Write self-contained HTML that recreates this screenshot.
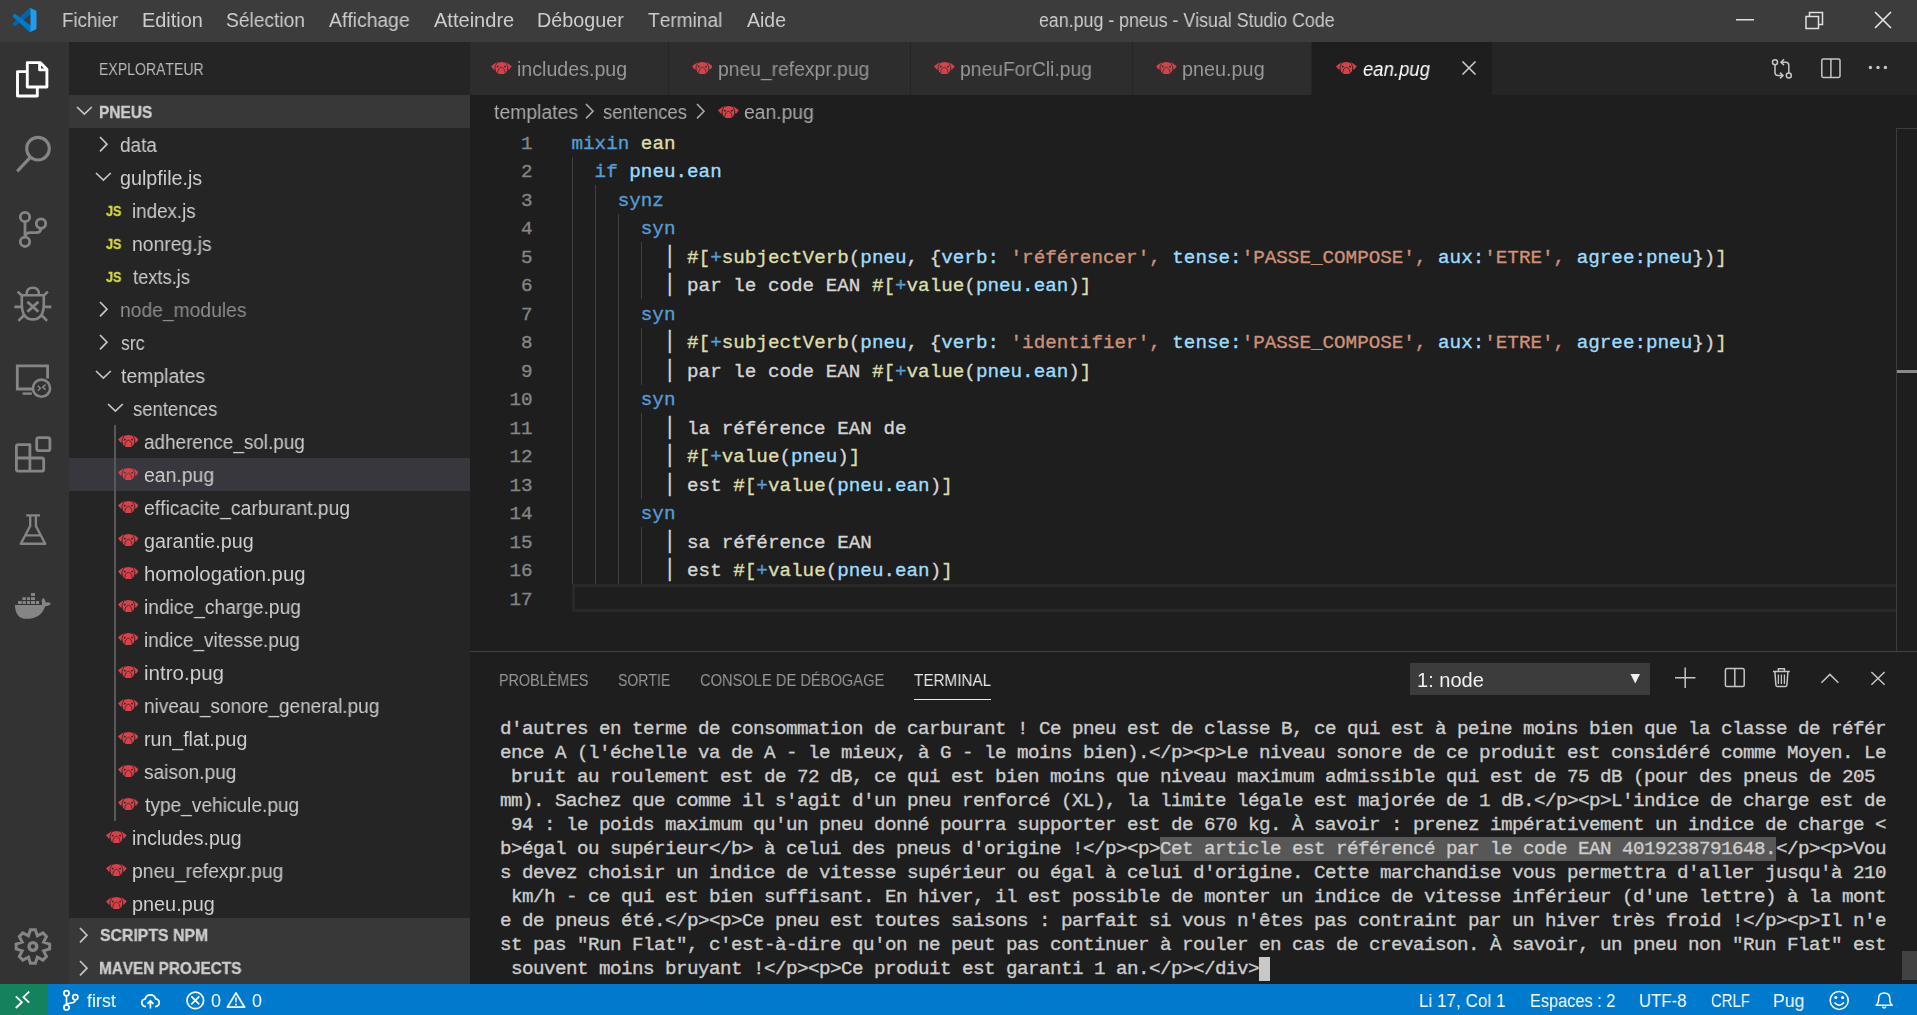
<!DOCTYPE html>
<html lang="fr"><head><meta charset="utf-8"><title>ean.pug - pneus - Visual Studio Code</title>
<style>
html,body{margin:0;padding:0;background:#1e1e1e}
body{width:1917px;height:1015px;position:relative;overflow:hidden;font-family:"Liberation Sans",sans-serif;font-kerning:none}
.b{position:absolute;display:block}
.t{position:absolute;white-space:pre;margin:0;transform-origin:0 0}
.g{will-change:transform}
.c{font-family:"Liberation Mono",monospace;font-size:19.25px;line-height:27px;-webkit-text-stroke:0.35px currentColor}
.p{display:inline-block;transform:scaleY(1.2);transform-origin:50% 69%}
.k{color:#569cd6}.f{color:#dcdcaa}.v{color:#9cdcfe}.s{color:#ce9178}
</style></head><body>

<div class="b" style="left:0px;top:0px;width:1917px;height:42px;background:#3c3c3c;"></div>
<div class="b" style="left:0px;top:42px;width:69px;height:942px;background:#333333;"></div>
<div class="b" style="left:69px;top:42px;width:401px;height:942px;background:#252526;"></div>
<div class="b" style="left:470px;top:42px;width:1447px;height:53px;background:#252526;"></div>
<div class="b" style="left:470px;top:95px;width:1447px;height:889px;background:#1e1e1e;"></div>
<div class="b" style="left:0px;top:984px;width:1917px;height:31px;background:#007acc;"></div>
<div class="b" style="left:0px;top:984px;width:48px;height:31px;background:#16825d;"></div>
<svg class="b" style="left:12px;top:8px;" width="25" height="24" viewBox="0 0 256 256"><path d="M246.94 27.638L194.193 2.241a15.947 15.947 0 0 0-18.194 3.092L3.324 162.773c-4.645 4.235-4.64 11.547.011 15.775L17.44 191.37a10.667 10.667 0 0 0 13.622.606L239.003 34.226c6.976-5.292 16.996-.317 16.996 8.44v-.612a16 16 0 0 0-9.059-14.416z" fill="#0065A9"/><path d="M246.94 228.362l-52.747 25.397a15.95 15.95 0 0 1-18.194-3.092L3.324 93.227c-4.645-4.234-4.64-11.547.011-15.775L17.44 64.63a10.667 10.667 0 0 1 13.622-.605l207.941 157.748c6.976 5.292 16.996.317 16.996-8.44v.613a16.001 16.001 0 0 1-9.059 14.416z" fill="#007ACC"/><path d="M194.196 253.763A15.955 15.955 0 0 1 176 250.667c5.904 5.904 16 1.722 16-6.628V11.961c0-8.35-10.096-12.532-16-6.628a15.955 15.955 0 0 1 18.196-3.097L246.934 27.6A16 16 0 0 1 256 42.017v171.965a16 16 0 0 1-9.066 14.419l-52.738 25.362z" fill="#1F9CF0"/></svg>
<div class="t g" style="left:61.67px;top:7.00px;line-height:27px;font-size:19.5px;color:#cccccc;transform:scaleX(0.9596);">Fichier</div>
<div class="t g" style="left:141.67px;top:7.00px;line-height:27px;font-size:19.5px;color:#cccccc;transform:scaleX(1.0219);">Edition</div>
<div class="t g" style="left:226.03px;top:7.00px;line-height:27px;font-size:19.5px;color:#cccccc;transform:scaleX(0.9851);">Sélection</div>
<div class="t g" style="left:329.06px;top:7.00px;line-height:27px;font-size:19.5px;color:#cccccc;transform:scaleX(0.9925);">Affichage</div>
<div class="t g" style="left:434.06px;top:7.00px;line-height:27px;font-size:19.5px;color:#cccccc;transform:scaleX(1.0280);">Atteindre</div>
<div class="t g" style="left:537.18px;top:7.00px;line-height:27px;font-size:19.5px;color:#cccccc;transform:scaleX(1.0129);">Déboguer</div>
<div class="t g" style="left:648.47px;top:7.00px;line-height:27px;font-size:19.5px;color:#cccccc;transform:scaleX(0.9797);">Terminal</div>
<div class="t g" style="left:747.06px;top:7.00px;line-height:27px;font-size:19.5px;color:#cccccc;transform:scaleX(0.9967);">Aide</div>
<div class="t g" style="left:1038.84px;top:7.00px;line-height:27px;font-size:19.5px;color:#cccccc;transform:scaleX(0.9121);">ean.pug - pneus - Visual Studio Code</div>
<svg class="b" style="left:1736px;top:19px;" width="18" height="2" viewBox="0 0 18 2"><rect width="18" height="1.5" fill="#e0e0e0"/></svg>
<svg class="b" style="left:1805px;top:11px;" width="19" height="19" viewBox="0 0 19 19"><path d="M1 5.5 H13.5 V17.5 H1Z M4.5 5.5 V1.5 H17.5 V13.5 H13.5" fill="none" stroke="#e0e0e0" stroke-width="1.5"/></svg>
<svg class="b" style="left:1874px;top:11px;" width="18" height="18" viewBox="0 0 18 18"><path d="M1 1 L17 17 M17 1 L1 17" fill="none" stroke="#e8e8e8" stroke-width="1.6"/></svg>
<svg class="b" style="left:0px;top:0px;" width="69" height="984" viewBox="0 0 69 984">
<g fill="none" stroke="#ffffff" stroke-width="2.9" stroke-linejoin="round">
<path d="M27.3 62.6 H40.2 L46.9 69.3 V87 H27.3Z M39.6 62.8 V69.9 H46.7" />
<path d="M27.2 71.6 H17.5 V96 H37.3 V87.4"/>
</g>
<g fill="none" stroke="#858585" stroke-width="3.1">
<circle cx="38" cy="148.7" r="11.3"/><path d="M30 157.6 L17.2 171.4"/>
</g>
<g fill="none" stroke="#858585" stroke-width="2.8">
<circle cx="25" cy="217" r="4.7"/><circle cx="25" cy="241.8" r="4.7"/><circle cx="41" cy="223.6" r="4.7"/>
<path d="M25 221.7 V237.1 M41 228.3 Q40.6 232.6 36.5 232.6 H30 Q26 232.6 25 236.6"/>
</g>
<g fill="none" stroke="#858585" stroke-width="2.6">
<path d="M21.8 295.2 H43.8 V304 Q43.8 319.4 32.8 319.4 Q21.8 319.4 21.8 304Z"/>
<path d="M26.7 295.2 V294 Q26.7 287.7 32.8 287.7 Q38.9 287.7 38.9 294 V295.2"/>
<path d="M14.4 306.9 H21 M44.6 306.9 H51.3 M17.6 291.6 L22.4 296 M47.9 291.6 L43.2 296 M18.4 320.8 L24.2 315 M47.1 320.8 L41.4 315"/>
<path d="M27.4 301.8 L38.4 311.8 M38.4 301.8 L27.4 311.8" stroke-width="2.9"/>
</g>
<g fill="none" stroke="#858585" stroke-width="2.8">
<path d="M32 389 H17.3 V365.9 H47.6 V378.4"/><path d="M22.6 393.6 H31.8" stroke-width="2.4"/>
<circle cx="41.5" cy="388.2" r="8.6" stroke-width="2.6"/>
<path d="M37.8 385.8 L40.4 388.2 L37.8 390.8 M45.6 384.6 L42.6 387.2 L45.6 389.6" stroke-width="1.5"/>
</g>
<g fill="none" stroke="#858585" stroke-width="2.8" stroke-linejoin="round">
<path d="M18.4 444.7 H29.9 V458 H41.7 Q43.7 458 43.7 460 V469.2 Q43.7 471.2 41.7 471.2 H18.4 Q16.4 471.2 16.4 469.2 V446.7 Q16.4 444.7 18.4 444.7Z M29.9 458 V471.2 M16.4 458 H29.9"/>
<rect x="36.7" y="437.7" width="13.2" height="13" rx="2"/>
</g>
<g fill="none" stroke="#858585" stroke-width="2.4" stroke-linejoin="round">
<path d="M26.2 515.4 H40 M30.2 515.4 V526 L20.8 543.8 H45.2 L35.9 526 V515.4 M25.3 535.4 H40.6"/>
</g>
<g fill="#858585">
<path d="M14.9 604.9 H41.8 Q42.6 603.6 41.7 602 Q41.2 599.6 43.2 597.8 Q45.4 599.6 45.6 602.4 Q48.5 601.6 50.9 603.4 Q49.5 606 45.2 606.2 Q41 618.8 26.5 618.8 Q15.4 618.8 14.9 604.9Z"/>
<path d="M18 601h3.8v3.1h-3.8z M22.6 601h3.3v3.1h-3.3z M27 601h3.1v3.1h-3.1z M31 601h4v3.1h-4z M35.9 601h3.2v3.1h-3.2z M22.4 597.2h3.5v2.9h-3.5z M27 597.2h3.1v2.9h-3.1z M31 597.2h4v2.9h-4z M31 593h4v3h-4z"/>
</g>
<g fill="none" stroke="#858585" stroke-width="3">
<path d="M30.43 929.78 L35.37 929.78 L37.34 935.78 L42.97 932.93 L46.47 936.43 L43.62 942.06 L49.62 944.03 L49.62 948.97 L43.62 950.94 L46.47 956.57 L42.97 960.07 L37.34 957.22 L35.37 963.22 L30.43 963.22 L28.46 957.22 L22.83 960.07 L19.33 956.57 L22.18 950.94 L16.18 948.97 L16.18 944.03 L22.18 942.06 L19.33 936.43 L22.83 932.93 L28.46 935.78Z"/><circle cx="32.9" cy="946.5" r="3.85" stroke-width="3.4"/>
</g>
</svg>
<div class="t g" style="left:99.05px;top:58.00px;line-height:24px;font-size:17px;color:#bbbbbb;transform:scaleX(0.8271);">EXPLORATEUR</div>
<div class="b" style="left:69px;top:95px;width:401px;height:33px;background:#383838;"></div>
<svg class="b" style="left:74.89999999999999px;top:104.7px;" width="18.8" height="11.0" viewBox="74.89999999999999 104.7 18.8 11.0"><path d="M76.89999999999999 106.7 L84.3 113.7 L91.7 106.7" fill="none" stroke="#c5c5c5" stroke-width="1.7"/></svg>
<div class="t g" style="left:99.17px;top:101.00px;line-height:24px;font-size:17px;color:#cccccc;transform:scaleX(0.9089);font-weight:bold;-webkit-text-stroke:0.35px currentColor;">PNEUS</div>
<div class="b" style="left:69px;top:458px;width:401px;height:33px;background:#37373d;"></div>
<div class="b" style="left:113.9px;top:425px;width:1.7px;height:396px;background:#585858;"></div>
<div class="t g" style="left:119.80px;top:132.00px;line-height:27px;font-size:19.5px;color:#cccccc;transform:scaleX(0.9749);">data</div>
<svg class="b" style="left:97.9px;top:134.5px;" width="11.0" height="18.4" viewBox="97.9 134.5 11.0 18.4"><path d="M99.9 136.5 L106.9 143.7 L99.9 150.89999999999998" fill="none" stroke="#c5c5c5" stroke-width="1.7"/></svg>
<div class="t g" style="left:119.77px;top:165.00px;line-height:27px;font-size:19.5px;color:#cccccc;transform:scaleX(1.0116);">gulpfile.js</div>
<svg class="b" style="left:94.0px;top:171.2px;" width="18.8" height="11.0" viewBox="94.0 171.2 18.8 11.0"><path d="M96.0 173.2 L103.4 180.2 L110.80000000000001 173.2" fill="none" stroke="#c5c5c5" stroke-width="1.7"/></svg>
<div class="t g" style="left:131.94px;top:198.00px;line-height:27px;font-size:19.5px;color:#cccccc;transform:scaleX(0.9640);">index.js</div>
<div class="t g" style="left:105.81px;top:200.00px;line-height:21px;font-size:15px;color:#d5d544;transform:scaleX(0.8441);font-weight:bold;-webkit-text-stroke:0.35px currentColor;">JS</div>
<div class="t g" style="left:131.92px;top:231.00px;line-height:27px;font-size:19.5px;color:#cccccc;transform:scaleX(0.9921);">nonreg.js</div>
<div class="t g" style="left:105.81px;top:233.00px;line-height:21px;font-size:15px;color:#d5d544;transform:scaleX(0.8441);font-weight:bold;-webkit-text-stroke:0.35px currentColor;">JS</div>
<div class="t g" style="left:132.92px;top:264.00px;line-height:27px;font-size:19.5px;color:#cccccc;transform:scaleX(0.9383);">texts.js</div>
<div class="t g" style="left:105.81px;top:266.00px;line-height:21px;font-size:15px;color:#d5d544;transform:scaleX(0.8441);font-weight:bold;-webkit-text-stroke:0.35px currentColor;">JS</div>
<div class="t g" style="left:119.82px;top:297.00px;line-height:27px;font-size:19.5px;color:#8c8c8c;transform:scaleX(0.9886);">node_modules</div>
<svg class="b" style="left:97.9px;top:299.5px;" width="11.0" height="18.4" viewBox="97.9 299.5 11.0 18.4"><path d="M99.9 301.5 L106.9 308.7 L99.9 315.9" fill="none" stroke="#c5c5c5" stroke-width="1.7"/></svg>
<div class="t g" style="left:120.61px;top:330.00px;line-height:27px;font-size:19.5px;color:#cccccc;transform:scaleX(0.9063);">src</div>
<svg class="b" style="left:97.9px;top:332.5px;" width="11.0" height="18.4" viewBox="97.9 332.5 11.0 18.4"><path d="M99.9 334.5 L106.9 341.7 L99.9 348.9" fill="none" stroke="#c5c5c5" stroke-width="1.7"/></svg>
<div class="t g" style="left:120.91px;top:363.00px;line-height:27px;font-size:19.5px;color:#cccccc;transform:scaleX(0.9947);">templates</div>
<svg class="b" style="left:94.0px;top:369.2px;" width="18.8" height="11.0" viewBox="94.0 369.2 18.8 11.0"><path d="M96.0 371.2 L103.4 378.2 L110.80000000000001 371.2" fill="none" stroke="#c5c5c5" stroke-width="1.7"/></svg>
<div class="t g" style="left:132.69px;top:396.00px;line-height:27px;font-size:19.5px;color:#cccccc;transform:scaleX(0.9481);">sentences</div>
<svg class="b" style="left:106.0px;top:402.2px;" width="18.8" height="11.0" viewBox="106.0 402.2 18.8 11.0"><path d="M108.0 404.2 L115.4 411.2 L122.80000000000001 404.2" fill="none" stroke="#c5c5c5" stroke-width="1.7"/></svg>
<div class="t g" style="left:144.20px;top:429.00px;line-height:27px;font-size:19.5px;color:#cccccc;transform:scaleX(0.9695);">adherence_sol.pug</div>
<svg class="b" style="left:117.7px;top:435.3px;" width="20.8" height="12" viewBox="0 0 20.8 12"><g fill="#d8404a"><path d="M0 4.2 L5.2 .5 L5.9 1 L4.1 4.8 L3.9 7.7 L2.6 7.6 L1.2 5.8Z"/><path d="M20.8 4.2 L15.6 .5 L14.9 1 L16.7 4.8 L16.9 7.7 L18.2 7.6 L19.6 5.8Z"/><path d="M6.5 .75 L10.4 .1 L14.3 .75 L15.4 1.2 L16.7 4.8 L16.6 6.8 L15.5 10.3 L13.6 11.2 L13.4 12 H7.4 L7.2 11.2 L5.3 10.3 L4.2 6.8 L4.1 4.8 L5.4 1.2Z"/></g><g fill="none" stroke="#252526" stroke-width=".75"><path d="M5.8 .9 L4.1 4.7 L3.9 7.8 M15 .9 L16.7 4.7 L16.9 7.8"/><path d="M6.8 10.8 Q6.9 7.6 8.3 6.4 Q9.6 5.3 10.4 5.2 Q11.2 5.3 12.5 6.4 Q13.9 7.6 14 10.8"/></g><circle cx="6.75" cy="4.6" r=".95" fill="#252526"/><circle cx="14.05" cy="4.6" r=".95" fill="#252526"/></svg>
<div class="t g" style="left:144.18px;top:462.00px;line-height:27px;font-size:19.5px;color:#cccccc;transform:scaleX(0.9941);">ean.pug</div>
<svg class="b" style="left:117.7px;top:468.3px;" width="20.8" height="12" viewBox="0 0 20.8 12"><g fill="#d8404a"><path d="M0 4.2 L5.2 .5 L5.9 1 L4.1 4.8 L3.9 7.7 L2.6 7.6 L1.2 5.8Z"/><path d="M20.8 4.2 L15.6 .5 L14.9 1 L16.7 4.8 L16.9 7.7 L18.2 7.6 L19.6 5.8Z"/><path d="M6.5 .75 L10.4 .1 L14.3 .75 L15.4 1.2 L16.7 4.8 L16.6 6.8 L15.5 10.3 L13.6 11.2 L13.4 12 H7.4 L7.2 11.2 L5.3 10.3 L4.2 6.8 L4.1 4.8 L5.4 1.2Z"/></g><g fill="none" stroke="#37373d" stroke-width=".75"><path d="M5.8 .9 L4.1 4.7 L3.9 7.8 M15 .9 L16.7 4.7 L16.9 7.8"/><path d="M6.8 10.8 Q6.9 7.6 8.3 6.4 Q9.6 5.3 10.4 5.2 Q11.2 5.3 12.5 6.4 Q13.9 7.6 14 10.8"/></g><circle cx="6.75" cy="4.6" r=".95" fill="#37373d"/><circle cx="14.05" cy="4.6" r=".95" fill="#37373d"/></svg>
<div class="t g" style="left:144.18px;top:495.00px;line-height:27px;font-size:19.5px;color:#cccccc;transform:scaleX(0.9901);">efficacite_carburant.pug</div>
<svg class="b" style="left:117.7px;top:501.3px;" width="20.8" height="12" viewBox="0 0 20.8 12"><g fill="#d8404a"><path d="M0 4.2 L5.2 .5 L5.9 1 L4.1 4.8 L3.9 7.7 L2.6 7.6 L1.2 5.8Z"/><path d="M20.8 4.2 L15.6 .5 L14.9 1 L16.7 4.8 L16.9 7.7 L18.2 7.6 L19.6 5.8Z"/><path d="M6.5 .75 L10.4 .1 L14.3 .75 L15.4 1.2 L16.7 4.8 L16.6 6.8 L15.5 10.3 L13.6 11.2 L13.4 12 H7.4 L7.2 11.2 L5.3 10.3 L4.2 6.8 L4.1 4.8 L5.4 1.2Z"/></g><g fill="none" stroke="#252526" stroke-width=".75"><path d="M5.8 .9 L4.1 4.7 L3.9 7.8 M15 .9 L16.7 4.7 L16.9 7.8"/><path d="M6.8 10.8 Q6.9 7.6 8.3 6.4 Q9.6 5.3 10.4 5.2 Q11.2 5.3 12.5 6.4 Q13.9 7.6 14 10.8"/></g><circle cx="6.75" cy="4.6" r=".95" fill="#252526"/><circle cx="14.05" cy="4.6" r=".95" fill="#252526"/></svg>
<div class="t g" style="left:144.17px;top:528.00px;line-height:27px;font-size:19.5px;color:#cccccc;transform:scaleX(1.0118);">garantie.pug</div>
<svg class="b" style="left:117.7px;top:534.3px;" width="20.8" height="12" viewBox="0 0 20.8 12"><g fill="#d8404a"><path d="M0 4.2 L5.2 .5 L5.9 1 L4.1 4.8 L3.9 7.7 L2.6 7.6 L1.2 5.8Z"/><path d="M20.8 4.2 L15.6 .5 L14.9 1 L16.7 4.8 L16.9 7.7 L18.2 7.6 L19.6 5.8Z"/><path d="M6.5 .75 L10.4 .1 L14.3 .75 L15.4 1.2 L16.7 4.8 L16.6 6.8 L15.5 10.3 L13.6 11.2 L13.4 12 H7.4 L7.2 11.2 L5.3 10.3 L4.2 6.8 L4.1 4.8 L5.4 1.2Z"/></g><g fill="none" stroke="#252526" stroke-width=".75"><path d="M5.8 .9 L4.1 4.7 L3.9 7.8 M15 .9 L16.7 4.7 L16.9 7.8"/><path d="M6.8 10.8 Q6.9 7.6 8.3 6.4 Q9.6 5.3 10.4 5.2 Q11.2 5.3 12.5 6.4 Q13.9 7.6 14 10.8"/></g><circle cx="6.75" cy="4.6" r=".95" fill="#252526"/><circle cx="14.05" cy="4.6" r=".95" fill="#252526"/></svg>
<div class="t g" style="left:143.59px;top:561.00px;line-height:27px;font-size:19.5px;color:#cccccc;transform:scaleX(1.0418);">homologation.pug</div>
<svg class="b" style="left:117.7px;top:567.3px;" width="20.8" height="12" viewBox="0 0 20.8 12"><g fill="#d8404a"><path d="M0 4.2 L5.2 .5 L5.9 1 L4.1 4.8 L3.9 7.7 L2.6 7.6 L1.2 5.8Z"/><path d="M20.8 4.2 L15.6 .5 L14.9 1 L16.7 4.8 L16.9 7.7 L18.2 7.6 L19.6 5.8Z"/><path d="M6.5 .75 L10.4 .1 L14.3 .75 L15.4 1.2 L16.7 4.8 L16.6 6.8 L15.5 10.3 L13.6 11.2 L13.4 12 H7.4 L7.2 11.2 L5.3 10.3 L4.2 6.8 L4.1 4.8 L5.4 1.2Z"/></g><g fill="none" stroke="#252526" stroke-width=".75"><path d="M5.8 .9 L4.1 4.7 L3.9 7.8 M15 .9 L16.7 4.7 L16.9 7.8"/><path d="M6.8 10.8 Q6.9 7.6 8.3 6.4 Q9.6 5.3 10.4 5.2 Q11.2 5.3 12.5 6.4 Q13.9 7.6 14 10.8"/></g><circle cx="6.75" cy="4.6" r=".95" fill="#252526"/><circle cx="14.05" cy="4.6" r=".95" fill="#252526"/></svg>
<div class="t g" style="left:143.72px;top:594.00px;line-height:27px;font-size:19.5px;color:#cccccc;transform:scaleX(0.9846);">indice_charge.pug</div>
<svg class="b" style="left:117.7px;top:600.3px;" width="20.8" height="12" viewBox="0 0 20.8 12"><g fill="#d8404a"><path d="M0 4.2 L5.2 .5 L5.9 1 L4.1 4.8 L3.9 7.7 L2.6 7.6 L1.2 5.8Z"/><path d="M20.8 4.2 L15.6 .5 L14.9 1 L16.7 4.8 L16.9 7.7 L18.2 7.6 L19.6 5.8Z"/><path d="M6.5 .75 L10.4 .1 L14.3 .75 L15.4 1.2 L16.7 4.8 L16.6 6.8 L15.5 10.3 L13.6 11.2 L13.4 12 H7.4 L7.2 11.2 L5.3 10.3 L4.2 6.8 L4.1 4.8 L5.4 1.2Z"/></g><g fill="none" stroke="#252526" stroke-width=".75"><path d="M5.8 .9 L4.1 4.7 L3.9 7.8 M15 .9 L16.7 4.7 L16.9 7.8"/><path d="M6.8 10.8 Q6.9 7.6 8.3 6.4 Q9.6 5.3 10.4 5.2 Q11.2 5.3 12.5 6.4 Q13.9 7.6 14 10.8"/></g><circle cx="6.75" cy="4.6" r=".95" fill="#252526"/><circle cx="14.05" cy="4.6" r=".95" fill="#252526"/></svg>
<div class="t g" style="left:143.73px;top:627.00px;line-height:27px;font-size:19.5px;color:#cccccc;transform:scaleX(0.9717);">indice_vitesse.pug</div>
<svg class="b" style="left:117.7px;top:633.3px;" width="20.8" height="12" viewBox="0 0 20.8 12"><g fill="#d8404a"><path d="M0 4.2 L5.2 .5 L5.9 1 L4.1 4.8 L3.9 7.7 L2.6 7.6 L1.2 5.8Z"/><path d="M20.8 4.2 L15.6 .5 L14.9 1 L16.7 4.8 L16.9 7.7 L18.2 7.6 L19.6 5.8Z"/><path d="M6.5 .75 L10.4 .1 L14.3 .75 L15.4 1.2 L16.7 4.8 L16.6 6.8 L15.5 10.3 L13.6 11.2 L13.4 12 H7.4 L7.2 11.2 L5.3 10.3 L4.2 6.8 L4.1 4.8 L5.4 1.2Z"/></g><g fill="none" stroke="#252526" stroke-width=".75"><path d="M5.8 .9 L4.1 4.7 L3.9 7.8 M15 .9 L16.7 4.7 L16.9 7.8"/><path d="M6.8 10.8 Q6.9 7.6 8.3 6.4 Q9.6 5.3 10.4 5.2 Q11.2 5.3 12.5 6.4 Q13.9 7.6 14 10.8"/></g><circle cx="6.75" cy="4.6" r=".95" fill="#252526"/><circle cx="14.05" cy="4.6" r=".95" fill="#252526"/></svg>
<div class="t g" style="left:143.62px;top:660.00px;line-height:27px;font-size:19.5px;color:#cccccc;transform:scaleX(1.0542);">intro.pug</div>
<svg class="b" style="left:117.7px;top:666.3px;" width="20.8" height="12" viewBox="0 0 20.8 12"><g fill="#d8404a"><path d="M0 4.2 L5.2 .5 L5.9 1 L4.1 4.8 L3.9 7.7 L2.6 7.6 L1.2 5.8Z"/><path d="M20.8 4.2 L15.6 .5 L14.9 1 L16.7 4.8 L16.9 7.7 L18.2 7.6 L19.6 5.8Z"/><path d="M6.5 .75 L10.4 .1 L14.3 .75 L15.4 1.2 L16.7 4.8 L16.6 6.8 L15.5 10.3 L13.6 11.2 L13.4 12 H7.4 L7.2 11.2 L5.3 10.3 L4.2 6.8 L4.1 4.8 L5.4 1.2Z"/></g><g fill="none" stroke="#252526" stroke-width=".75"><path d="M5.8 .9 L4.1 4.7 L3.9 7.8 M15 .9 L16.7 4.7 L16.9 7.8"/><path d="M6.8 10.8 Q6.9 7.6 8.3 6.4 Q9.6 5.3 10.4 5.2 Q11.2 5.3 12.5 6.4 Q13.9 7.6 14 10.8"/></g><circle cx="6.75" cy="4.6" r=".95" fill="#252526"/><circle cx="14.05" cy="4.6" r=".95" fill="#252526"/></svg>
<div class="t g" style="left:143.74px;top:693.00px;line-height:27px;font-size:19.5px;color:#cccccc;transform:scaleX(0.9731);">niveau_sonore_general.pug</div>
<svg class="b" style="left:117.7px;top:699.3px;" width="20.8" height="12" viewBox="0 0 20.8 12"><g fill="#d8404a"><path d="M0 4.2 L5.2 .5 L5.9 1 L4.1 4.8 L3.9 7.7 L2.6 7.6 L1.2 5.8Z"/><path d="M20.8 4.2 L15.6 .5 L14.9 1 L16.7 4.8 L16.9 7.7 L18.2 7.6 L19.6 5.8Z"/><path d="M6.5 .75 L10.4 .1 L14.3 .75 L15.4 1.2 L16.7 4.8 L16.6 6.8 L15.5 10.3 L13.6 11.2 L13.4 12 H7.4 L7.2 11.2 L5.3 10.3 L4.2 6.8 L4.1 4.8 L5.4 1.2Z"/></g><g fill="none" stroke="#252526" stroke-width=".75"><path d="M5.8 .9 L4.1 4.7 L3.9 7.8 M15 .9 L16.7 4.7 L16.9 7.8"/><path d="M6.8 10.8 Q6.9 7.6 8.3 6.4 Q9.6 5.3 10.4 5.2 Q11.2 5.3 12.5 6.4 Q13.9 7.6 14 10.8"/></g><circle cx="6.75" cy="4.6" r=".95" fill="#252526"/><circle cx="14.05" cy="4.6" r=".95" fill="#252526"/></svg>
<div class="t g" style="left:143.70px;top:726.00px;line-height:27px;font-size:19.5px;color:#cccccc;transform:scaleX(1.0036);">run_flat.pug</div>
<svg class="b" style="left:117.7px;top:732.3px;" width="20.8" height="12" viewBox="0 0 20.8 12"><g fill="#d8404a"><path d="M0 4.2 L5.2 .5 L5.9 1 L4.1 4.8 L3.9 7.7 L2.6 7.6 L1.2 5.8Z"/><path d="M20.8 4.2 L15.6 .5 L14.9 1 L16.7 4.8 L16.9 7.7 L18.2 7.6 L19.6 5.8Z"/><path d="M6.5 .75 L10.4 .1 L14.3 .75 L15.4 1.2 L16.7 4.8 L16.6 6.8 L15.5 10.3 L13.6 11.2 L13.4 12 H7.4 L7.2 11.2 L5.3 10.3 L4.2 6.8 L4.1 4.8 L5.4 1.2Z"/></g><g fill="none" stroke="#252526" stroke-width=".75"><path d="M5.8 .9 L4.1 4.7 L3.9 7.8 M15 .9 L16.7 4.7 L16.9 7.8"/><path d="M6.8 10.8 Q6.9 7.6 8.3 6.4 Q9.6 5.3 10.4 5.2 Q11.2 5.3 12.5 6.4 Q13.9 7.6 14 10.8"/></g><circle cx="6.75" cy="4.6" r=".95" fill="#252526"/><circle cx="14.05" cy="4.6" r=".95" fill="#252526"/></svg>
<div class="t g" style="left:144.47px;top:759.00px;line-height:27px;font-size:19.5px;color:#cccccc;transform:scaleX(0.9792);">saison.pug</div>
<svg class="b" style="left:117.7px;top:765.3px;" width="20.8" height="12" viewBox="0 0 20.8 12"><g fill="#d8404a"><path d="M0 4.2 L5.2 .5 L5.9 1 L4.1 4.8 L3.9 7.7 L2.6 7.6 L1.2 5.8Z"/><path d="M20.8 4.2 L15.6 .5 L14.9 1 L16.7 4.8 L16.9 7.7 L18.2 7.6 L19.6 5.8Z"/><path d="M6.5 .75 L10.4 .1 L14.3 .75 L15.4 1.2 L16.7 4.8 L16.6 6.8 L15.5 10.3 L13.6 11.2 L13.4 12 H7.4 L7.2 11.2 L5.3 10.3 L4.2 6.8 L4.1 4.8 L5.4 1.2Z"/></g><g fill="none" stroke="#252526" stroke-width=".75"><path d="M5.8 .9 L4.1 4.7 L3.9 7.8 M15 .9 L16.7 4.7 L16.9 7.8"/><path d="M6.8 10.8 Q6.9 7.6 8.3 6.4 Q9.6 5.3 10.4 5.2 Q11.2 5.3 12.5 6.4 Q13.9 7.6 14 10.8"/></g><circle cx="6.75" cy="4.6" r=".95" fill="#252526"/><circle cx="14.05" cy="4.6" r=".95" fill="#252526"/></svg>
<div class="t g" style="left:144.71px;top:792.00px;line-height:27px;font-size:19.5px;color:#cccccc;transform:scaleX(0.9811);">type_vehicule.pug</div>
<svg class="b" style="left:117.7px;top:798.3px;" width="20.8" height="12" viewBox="0 0 20.8 12"><g fill="#d8404a"><path d="M0 4.2 L5.2 .5 L5.9 1 L4.1 4.8 L3.9 7.7 L2.6 7.6 L1.2 5.8Z"/><path d="M20.8 4.2 L15.6 .5 L14.9 1 L16.7 4.8 L16.9 7.7 L18.2 7.6 L19.6 5.8Z"/><path d="M6.5 .75 L10.4 .1 L14.3 .75 L15.4 1.2 L16.7 4.8 L16.6 6.8 L15.5 10.3 L13.6 11.2 L13.4 12 H7.4 L7.2 11.2 L5.3 10.3 L4.2 6.8 L4.1 4.8 L5.4 1.2Z"/></g><g fill="none" stroke="#252526" stroke-width=".75"><path d="M5.8 .9 L4.1 4.7 L3.9 7.8 M15 .9 L16.7 4.7 L16.9 7.8"/><path d="M6.8 10.8 Q6.9 7.6 8.3 6.4 Q9.6 5.3 10.4 5.2 Q11.2 5.3 12.5 6.4 Q13.9 7.6 14 10.8"/></g><circle cx="6.75" cy="4.6" r=".95" fill="#252526"/><circle cx="14.05" cy="4.6" r=".95" fill="#252526"/></svg>
<div class="t g" style="left:131.90px;top:825.00px;line-height:27px;font-size:19.5px;color:#cccccc;transform:scaleX(0.9997);">includes.pug</div>
<svg class="b" style="left:105.8px;top:831.3px;" width="20.8" height="12" viewBox="0 0 20.8 12"><g fill="#d8404a"><path d="M0 4.2 L5.2 .5 L5.9 1 L4.1 4.8 L3.9 7.7 L2.6 7.6 L1.2 5.8Z"/><path d="M20.8 4.2 L15.6 .5 L14.9 1 L16.7 4.8 L16.9 7.7 L18.2 7.6 L19.6 5.8Z"/><path d="M6.5 .75 L10.4 .1 L14.3 .75 L15.4 1.2 L16.7 4.8 L16.6 6.8 L15.5 10.3 L13.6 11.2 L13.4 12 H7.4 L7.2 11.2 L5.3 10.3 L4.2 6.8 L4.1 4.8 L5.4 1.2Z"/></g><g fill="none" stroke="#252526" stroke-width=".75"><path d="M5.8 .9 L4.1 4.7 L3.9 7.8 M15 .9 L16.7 4.7 L16.9 7.8"/><path d="M6.8 10.8 Q6.9 7.6 8.3 6.4 Q9.6 5.3 10.4 5.2 Q11.2 5.3 12.5 6.4 Q13.9 7.6 14 10.8"/></g><circle cx="6.75" cy="4.6" r=".95" fill="#252526"/><circle cx="14.05" cy="4.6" r=".95" fill="#252526"/></svg>
<div class="t g" style="left:131.96px;top:858.00px;line-height:27px;font-size:19.5px;color:#cccccc;transform:scaleX(0.9897);">pneu_refexpr.pug</div>
<svg class="b" style="left:105.8px;top:864.3px;" width="20.8" height="12" viewBox="0 0 20.8 12"><g fill="#d8404a"><path d="M0 4.2 L5.2 .5 L5.9 1 L4.1 4.8 L3.9 7.7 L2.6 7.6 L1.2 5.8Z"/><path d="M20.8 4.2 L15.6 .5 L14.9 1 L16.7 4.8 L16.9 7.7 L18.2 7.6 L19.6 5.8Z"/><path d="M6.5 .75 L10.4 .1 L14.3 .75 L15.4 1.2 L16.7 4.8 L16.6 6.8 L15.5 10.3 L13.6 11.2 L13.4 12 H7.4 L7.2 11.2 L5.3 10.3 L4.2 6.8 L4.1 4.8 L5.4 1.2Z"/></g><g fill="none" stroke="#252526" stroke-width=".75"><path d="M5.8 .9 L4.1 4.7 L3.9 7.8 M15 .9 L16.7 4.7 L16.9 7.8"/><path d="M6.8 10.8 Q6.9 7.6 8.3 6.4 Q9.6 5.3 10.4 5.2 Q11.2 5.3 12.5 6.4 Q13.9 7.6 14 10.8"/></g><circle cx="6.75" cy="4.6" r=".95" fill="#252526"/><circle cx="14.05" cy="4.6" r=".95" fill="#252526"/></svg>
<div class="t g" style="left:131.92px;top:891.00px;line-height:27px;font-size:19.5px;color:#cccccc;transform:scaleX(1.0175);">pneu.pug</div>
<svg class="b" style="left:105.8px;top:897.3px;" width="20.8" height="12" viewBox="0 0 20.8 12"><g fill="#d8404a"><path d="M0 4.2 L5.2 .5 L5.9 1 L4.1 4.8 L3.9 7.7 L2.6 7.6 L1.2 5.8Z"/><path d="M20.8 4.2 L15.6 .5 L14.9 1 L16.7 4.8 L16.9 7.7 L18.2 7.6 L19.6 5.8Z"/><path d="M6.5 .75 L10.4 .1 L14.3 .75 L15.4 1.2 L16.7 4.8 L16.6 6.8 L15.5 10.3 L13.6 11.2 L13.4 12 H7.4 L7.2 11.2 L5.3 10.3 L4.2 6.8 L4.1 4.8 L5.4 1.2Z"/></g><g fill="none" stroke="#252526" stroke-width=".75"><path d="M5.8 .9 L4.1 4.7 L3.9 7.8 M15 .9 L16.7 4.7 L16.9 7.8"/><path d="M6.8 10.8 Q6.9 7.6 8.3 6.4 Q9.6 5.3 10.4 5.2 Q11.2 5.3 12.5 6.4 Q13.9 7.6 14 10.8"/></g><circle cx="6.75" cy="4.6" r=".95" fill="#252526"/><circle cx="14.05" cy="4.6" r=".95" fill="#252526"/></svg>
<div class="b" style="left:69px;top:918px;width:401px;height:66px;background:#383838;"></div>
<svg class="b" style="left:77.9px;top:925.6999999999999px;" width="11.0" height="18.4" viewBox="77.9 925.6999999999999 11.0 18.4"><path d="M79.9 927.6999999999999 L86.9 934.9 L79.9 942.1" fill="none" stroke="#c5c5c5" stroke-width="1.7"/></svg>
<svg class="b" style="left:77.9px;top:958.6999999999999px;" width="11.0" height="18.4" viewBox="77.9 958.6999999999999 11.0 18.4"><path d="M79.9 960.6999999999999 L86.9 967.9 L79.9 975.1" fill="none" stroke="#c5c5c5" stroke-width="1.7"/></svg>
<div class="t g" style="left:99.54px;top:924.00px;line-height:24px;font-size:17px;color:#cccccc;transform:scaleX(0.9306);font-weight:bold;-webkit-text-stroke:0.35px currentColor;">SCRIPTS NPM</div>
<div class="t g" style="left:98.97px;top:957.00px;line-height:24px;font-size:17px;color:#cccccc;transform:scaleX(0.9022);font-weight:bold;-webkit-text-stroke:0.35px currentColor;">MAVEN PROJECTS</div>
<div class="b" style="left:470px;top:42px;width:198px;height:52.5px;background:#2d2d2d;"></div>
<svg class="b" style="left:491.4px;top:62.4px;" width="20.8" height="12" viewBox="0 0 20.8 12"><g fill="#d8404a"><path d="M0 4.2 L5.2 .5 L5.9 1 L4.1 4.8 L3.9 7.7 L2.6 7.6 L1.2 5.8Z"/><path d="M20.8 4.2 L15.6 .5 L14.9 1 L16.7 4.8 L16.9 7.7 L18.2 7.6 L19.6 5.8Z"/><path d="M6.5 .75 L10.4 .1 L14.3 .75 L15.4 1.2 L16.7 4.8 L16.6 6.8 L15.5 10.3 L13.6 11.2 L13.4 12 H7.4 L7.2 11.2 L5.3 10.3 L4.2 6.8 L4.1 4.8 L5.4 1.2Z"/></g><g fill="none" stroke="#2d2d2d" stroke-width=".75"><path d="M5.8 .9 L4.1 4.7 L3.9 7.8 M15 .9 L16.7 4.7 L16.9 7.8"/><path d="M6.8 10.8 Q6.9 7.6 8.3 6.4 Q9.6 5.3 10.4 5.2 Q11.2 5.3 12.5 6.4 Q13.9 7.6 14 10.8"/></g><circle cx="6.75" cy="4.6" r=".95" fill="#2d2d2d"/><circle cx="14.05" cy="4.6" r=".95" fill="#2d2d2d"/></svg>
<div class="t g" style="left:516.89px;top:56.00px;line-height:27px;font-size:19.5px;color:#969696;transform:scaleX(1.0062);">includes.pug</div>
<div class="b" style="left:669px;top:42px;width:241px;height:52.5px;background:#2d2d2d;"></div>
<svg class="b" style="left:691.6px;top:62.4px;" width="20.8" height="12" viewBox="0 0 20.8 12"><g fill="#d8404a"><path d="M0 4.2 L5.2 .5 L5.9 1 L4.1 4.8 L3.9 7.7 L2.6 7.6 L1.2 5.8Z"/><path d="M20.8 4.2 L15.6 .5 L14.9 1 L16.7 4.8 L16.9 7.7 L18.2 7.6 L19.6 5.8Z"/><path d="M6.5 .75 L10.4 .1 L14.3 .75 L15.4 1.2 L16.7 4.8 L16.6 6.8 L15.5 10.3 L13.6 11.2 L13.4 12 H7.4 L7.2 11.2 L5.3 10.3 L4.2 6.8 L4.1 4.8 L5.4 1.2Z"/></g><g fill="none" stroke="#2d2d2d" stroke-width=".75"><path d="M5.8 .9 L4.1 4.7 L3.9 7.8 M15 .9 L16.7 4.7 L16.9 7.8"/><path d="M6.8 10.8 Q6.9 7.6 8.3 6.4 Q9.6 5.3 10.4 5.2 Q11.2 5.3 12.5 6.4 Q13.9 7.6 14 10.8"/></g><circle cx="6.75" cy="4.6" r=".95" fill="#2d2d2d"/><circle cx="14.05" cy="4.6" r=".95" fill="#2d2d2d"/></svg>
<div class="t g" style="left:717.76px;top:56.00px;line-height:27px;font-size:19.5px;color:#969696;transform:scaleX(0.9897);">pneu_refexpr.pug</div>
<div class="b" style="left:911px;top:42px;width:221px;height:52.5px;background:#2d2d2d;"></div>
<svg class="b" style="left:933.8px;top:62.4px;" width="20.8" height="12" viewBox="0 0 20.8 12"><g fill="#d8404a"><path d="M0 4.2 L5.2 .5 L5.9 1 L4.1 4.8 L3.9 7.7 L2.6 7.6 L1.2 5.8Z"/><path d="M20.8 4.2 L15.6 .5 L14.9 1 L16.7 4.8 L16.9 7.7 L18.2 7.6 L19.6 5.8Z"/><path d="M6.5 .75 L10.4 .1 L14.3 .75 L15.4 1.2 L16.7 4.8 L16.6 6.8 L15.5 10.3 L13.6 11.2 L13.4 12 H7.4 L7.2 11.2 L5.3 10.3 L4.2 6.8 L4.1 4.8 L5.4 1.2Z"/></g><g fill="none" stroke="#2d2d2d" stroke-width=".75"><path d="M5.8 .9 L4.1 4.7 L3.9 7.8 M15 .9 L16.7 4.7 L16.9 7.8"/><path d="M6.8 10.8 Q6.9 7.6 8.3 6.4 Q9.6 5.3 10.4 5.2 Q11.2 5.3 12.5 6.4 Q13.9 7.6 14 10.8"/></g><circle cx="6.75" cy="4.6" r=".95" fill="#2d2d2d"/><circle cx="14.05" cy="4.6" r=".95" fill="#2d2d2d"/></svg>
<div class="t g" style="left:959.96px;top:56.00px;line-height:27px;font-size:19.5px;color:#969696;transform:scaleX(0.9892);">pneuForCli.pug</div>
<div class="b" style="left:1133px;top:42px;width:178px;height:52.5px;background:#2d2d2d;"></div>
<svg class="b" style="left:1156.2px;top:62.4px;" width="20.8" height="12" viewBox="0 0 20.8 12"><g fill="#d8404a"><path d="M0 4.2 L5.2 .5 L5.9 1 L4.1 4.8 L3.9 7.7 L2.6 7.6 L1.2 5.8Z"/><path d="M20.8 4.2 L15.6 .5 L14.9 1 L16.7 4.8 L16.9 7.7 L18.2 7.6 L19.6 5.8Z"/><path d="M6.5 .75 L10.4 .1 L14.3 .75 L15.4 1.2 L16.7 4.8 L16.6 6.8 L15.5 10.3 L13.6 11.2 L13.4 12 H7.4 L7.2 11.2 L5.3 10.3 L4.2 6.8 L4.1 4.8 L5.4 1.2Z"/></g><g fill="none" stroke="#2d2d2d" stroke-width=".75"><path d="M5.8 .9 L4.1 4.7 L3.9 7.8 M15 .9 L16.7 4.7 L16.9 7.8"/><path d="M6.8 10.8 Q6.9 7.6 8.3 6.4 Q9.6 5.3 10.4 5.2 Q11.2 5.3 12.5 6.4 Q13.9 7.6 14 10.8"/></g><circle cx="6.75" cy="4.6" r=".95" fill="#2d2d2d"/><circle cx="14.05" cy="4.6" r=".95" fill="#2d2d2d"/></svg>
<div class="t g" style="left:1182.22px;top:56.00px;line-height:27px;font-size:19.5px;color:#969696;transform:scaleX(1.0163);">pneu.pug</div>
<div class="b" style="left:1312px;top:42px;width:180px;height:52.5px;background:#1e1e1e;"></div>
<svg class="b" style="left:1336.2px;top:62.4px;" width="20.8" height="12" viewBox="0 0 20.8 12"><g fill="#d8404a"><path d="M0 4.2 L5.2 .5 L5.9 1 L4.1 4.8 L3.9 7.7 L2.6 7.6 L1.2 5.8Z"/><path d="M20.8 4.2 L15.6 .5 L14.9 1 L16.7 4.8 L16.9 7.7 L18.2 7.6 L19.6 5.8Z"/><path d="M6.5 .75 L10.4 .1 L14.3 .75 L15.4 1.2 L16.7 4.8 L16.6 6.8 L15.5 10.3 L13.6 11.2 L13.4 12 H7.4 L7.2 11.2 L5.3 10.3 L4.2 6.8 L4.1 4.8 L5.4 1.2Z"/></g><g fill="none" stroke="#1e1e1e" stroke-width=".75"><path d="M5.8 .9 L4.1 4.7 L3.9 7.8 M15 .9 L16.7 4.7 L16.9 7.8"/><path d="M6.8 10.8 Q6.9 7.6 8.3 6.4 Q9.6 5.3 10.4 5.2 Q11.2 5.3 12.5 6.4 Q13.9 7.6 14 10.8"/></g><circle cx="6.75" cy="4.6" r=".95" fill="#1e1e1e"/><circle cx="14.05" cy="4.6" r=".95" fill="#1e1e1e"/></svg>
<div class="t g" style="left:1362.78px;top:56.00px;line-height:27px;font-size:19.5px;color:#ffffff;transform:scaleX(0.9489);font-style:italic;">ean.pug</div>
<svg class="b" style="left:1461px;top:60px;" width="16" height="16" viewBox="0 0 16 16"><path d="M1.5 1.5 L14.5 14.5 M14.5 1.5 L1.5 14.5" fill="none" stroke="#d0d0d0" stroke-width="1.5"/></svg>
<svg class="b" style="left:1768px;top:56px;" width="28" height="26" viewBox="1768 56 28 26"><g fill="none" stroke="#c5c5c5" stroke-width="1.5"><circle cx="1775" cy="62.2" r="2.5"/><circle cx="1788.8" cy="75.5" r="2.5"/>
<path d="M1775 64.8 V72.5 Q1775 75.5 1778 75.5 H1782.6 M1780 72.6 L1783 75.5 L1780 78.4"/>
<path d="M1788.8 72.9 V65.2 Q1788.8 62.2 1785.8 62.2 H1781.4 M1784 59.3 L1781 62.2 L1784 65.1"/></g></svg>
<svg class="b" style="left:1818px;top:56px;" width="26" height="26" viewBox="1818 56 26 26"><g fill="none" stroke="#c5c5c5" stroke-width="1.5"><rect x="1821.8" y="59" width="18.2" height="18.4" rx="1.4"/><path d="M1830.9 59 V77.4"/></g></svg>
<svg class="b" style="left:1866px;top:62px;" width="26" height="12" viewBox="1866 62 26 12"><g fill="#c5c5c5"><circle cx="1870.4" cy="67.5" r="1.7"/><circle cx="1878" cy="67.5" r="1.7"/><circle cx="1885.4" cy="67.5" r="1.7"/></g></svg>
<div class="t g" style="left:494.01px;top:99.00px;line-height:27px;font-size:19.5px;color:#a9a9a9;transform:scaleX(0.9935);">templates</div>
<svg class="b" style="left:584.2px;top:102.0px;" width="11.0" height="18.4" viewBox="584.2 102.0 11.0 18.4"><path d="M586.2 104.0 L593.2 111.2 L586.2 118.4" fill="none" stroke="#a9a9a9" stroke-width="1.6"/></svg>
<div class="t g" style="left:602.59px;top:99.00px;line-height:27px;font-size:19.5px;color:#a9a9a9;transform:scaleX(0.9436);">sentences</div>
<svg class="b" style="left:694.6px;top:102.0px;" width="11.0" height="18.4" viewBox="694.6 102.0 11.0 18.4"><path d="M696.6 104.0 L703.6 111.2 L696.6 118.4" fill="none" stroke="#a9a9a9" stroke-width="1.6"/></svg>
<svg class="b" style="left:718.4px;top:105.8px;" width="20.8" height="12" viewBox="0 0 20.8 12"><g fill="#d8404a"><path d="M0 4.2 L5.2 .5 L5.9 1 L4.1 4.8 L3.9 7.7 L2.6 7.6 L1.2 5.8Z"/><path d="M20.8 4.2 L15.6 .5 L14.9 1 L16.7 4.8 L16.9 7.7 L18.2 7.6 L19.6 5.8Z"/><path d="M6.5 .75 L10.4 .1 L14.3 .75 L15.4 1.2 L16.7 4.8 L16.6 6.8 L15.5 10.3 L13.6 11.2 L13.4 12 H7.4 L7.2 11.2 L5.3 10.3 L4.2 6.8 L4.1 4.8 L5.4 1.2Z"/></g><g fill="none" stroke="#1e1e1e" stroke-width=".75"><path d="M5.8 .9 L4.1 4.7 L3.9 7.8 M15 .9 L16.7 4.7 L16.9 7.8"/><path d="M6.8 10.8 Q6.9 7.6 8.3 6.4 Q9.6 5.3 10.4 5.2 Q11.2 5.3 12.5 6.4 Q13.9 7.6 14 10.8"/></g><circle cx="6.75" cy="4.6" r=".95" fill="#1e1e1e"/><circle cx="14.05" cy="4.6" r=".95" fill="#1e1e1e"/></svg>
<div class="t g" style="left:743.78px;top:99.00px;line-height:27px;font-size:19.5px;color:#a9a9a9;transform:scaleX(0.9897);">ean.pug</div>
<div class="b" style="left:572px;top:584px;width:1324px;height:28px;background:transparent;box-sizing:border-box;border:3px solid #282828;border-right:0;"></div>
<div class="b" style="left:572px;top:156.5px;width:1.4px;height:427.5px;background:#404040;"></div>
<div class="b" style="left:595px;top:185.0px;width:1.4px;height:399.0px;background:#404040;"></div>
<div class="b" style="left:618px;top:213.5px;width:1.4px;height:370.5px;background:#404040;"></div>
<div class="b" style="left:641px;top:242.0px;width:1.4px;height:57.0px;background:#404040;"></div>
<div class="b" style="left:641px;top:327.5px;width:1.4px;height:57.0px;background:#404040;"></div>
<div class="b" style="left:641px;top:413.0px;width:1.4px;height:85.5px;background:#404040;"></div>
<div class="b" style="left:641px;top:527.0px;width:1.4px;height:57.0px;background:#404040;"></div>
<div class="t c" style="left:521.05px;top:131.00px;color:#858585">1</div>
<div class="t c" style="left:571.5px;top:131.00px;color:#d4d4d4"><span class="k">mixin</span> <span class="f">ean</span></div>
<div class="t c" style="left:521.05px;top:159.00px;color:#858585">2</div>
<div class="t c" style="left:571.5px;top:159.00px;color:#d4d4d4">  <span class="k">if</span> <span class="v">pneu.ean</span></div>
<div class="t c" style="left:521.05px;top:188.00px;color:#858585">3</div>
<div class="t c" style="left:571.5px;top:188.00px;color:#d4d4d4">    <span class="k">synz</span></div>
<div class="t c" style="left:521.05px;top:216.00px;color:#858585">4</div>
<div class="t c" style="left:571.5px;top:216.00px;color:#d4d4d4">      <span class="k">syn</span></div>
<div class="t c" style="left:521.05px;top:245.00px;color:#858585">5</div>
<div class="t c" style="left:571.5px;top:245.00px;color:#d4d4d4">        <span class="p">|</span> <span class="f">#[</span><span class="k">+</span><span class="f">subjectVerb</span>(<span class="v">pneu</span>, {<span class="v">verb:</span> <span class="s">'référencer',</span> <span class="v">tense:</span><span class="s">'PASSE_COMPOSE',</span> <span class="v">aux:</span><span class="s">'ETRE',</span> <span class="v">agree:pneu</span>})<span class="f">]</span></div>
<div class="t c" style="left:521.05px;top:273.00px;color:#858585">6</div>
<div class="t c" style="left:571.5px;top:273.00px;color:#d4d4d4">        <span class="p">|</span> par le code EAN <span class="f">#[</span><span class="k">+</span><span class="f">value</span>(<span class="v">pneu.ean</span>)<span class="f">]</span></div>
<div class="t c" style="left:521.05px;top:302.00px;color:#858585">7</div>
<div class="t c" style="left:571.5px;top:302.00px;color:#d4d4d4">      <span class="k">syn</span></div>
<div class="t c" style="left:521.05px;top:330.00px;color:#858585">8</div>
<div class="t c" style="left:571.5px;top:330.00px;color:#d4d4d4">        <span class="p">|</span> <span class="f">#[</span><span class="k">+</span><span class="f">subjectVerb</span>(<span class="v">pneu</span>, {<span class="v">verb:</span> <span class="s">'identifier',</span> <span class="v">tense:</span><span class="s">'PASSE_COMPOSE',</span> <span class="v">aux:</span><span class="s">'ETRE',</span> <span class="v">agree:pneu</span>})<span class="f">]</span></div>
<div class="t c" style="left:521.05px;top:359.00px;color:#858585">9</div>
<div class="t c" style="left:571.5px;top:359.00px;color:#d4d4d4">        <span class="p">|</span> par le code EAN <span class="f">#[</span><span class="k">+</span><span class="f">value</span>(<span class="v">pneu.ean</span>)<span class="f">]</span></div>
<div class="t c" style="left:509.50px;top:387.00px;color:#858585">10</div>
<div class="t c" style="left:571.5px;top:387.00px;color:#d4d4d4">      <span class="k">syn</span></div>
<div class="t c" style="left:509.50px;top:416.00px;color:#858585">11</div>
<div class="t c" style="left:571.5px;top:416.00px;color:#d4d4d4">        <span class="p">|</span> la référence EAN de</div>
<div class="t c" style="left:509.50px;top:444.00px;color:#858585">12</div>
<div class="t c" style="left:571.5px;top:444.00px;color:#d4d4d4">        <span class="p">|</span> <span class="f">#[</span><span class="k">+</span><span class="f">value</span>(<span class="v">pneu</span>)<span class="f">]</span></div>
<div class="t c" style="left:509.50px;top:473.00px;color:#858585">13</div>
<div class="t c" style="left:571.5px;top:473.00px;color:#d4d4d4">        <span class="p">|</span> est <span class="f">#[</span><span class="k">+</span><span class="f">value</span>(<span class="v">pneu.ean</span>)<span class="f">]</span></div>
<div class="t c" style="left:509.50px;top:501.00px;color:#858585">14</div>
<div class="t c" style="left:571.5px;top:501.00px;color:#d4d4d4">      <span class="k">syn</span></div>
<div class="t c" style="left:509.50px;top:530.00px;color:#858585">15</div>
<div class="t c" style="left:571.5px;top:530.00px;color:#d4d4d4">        <span class="p">|</span> sa référence EAN</div>
<div class="t c" style="left:509.50px;top:558.00px;color:#858585">16</div>
<div class="t c" style="left:571.5px;top:558.00px;color:#d4d4d4">        <span class="p">|</span> est <span class="f">#[</span><span class="k">+</span><span class="f">value</span>(<span class="v">pneu.ean</span>)<span class="f">]</span></div>
<div class="t c" style="left:509.50px;top:587.00px;color:#858585">17</div>
<div class="b" style="left:1896px;top:128px;width:21px;height:523px;background:transparent;box-sizing:border-box;border-left:1px solid #3c3c3c;border-top:1px solid #3c3c3c;"></div>
<div class="b" style="left:1897px;top:370px;width:20px;height:3px;background:#8a8a8a;"></div>
<div class="b" style="left:470px;top:651px;width:1447px;height:1px;background:#414141;"></div>
<div class="t g" style="left:499.42px;top:669.00px;line-height:24px;font-size:17px;color:#979797;transform:scaleX(0.8443);">PROBLÈMES</div>
<div class="t g" style="left:618.36px;top:669.00px;line-height:24px;font-size:17px;color:#979797;transform:scaleX(0.8255);">SORTIE</div>
<div class="t g" style="left:700.45px;top:669.00px;line-height:24px;font-size:17px;color:#979797;transform:scaleX(0.8631);">CONSOLE DE DÉBOGAGE</div>
<div class="t g" style="left:914.26px;top:669.00px;line-height:24px;font-size:17px;color:#e7e7e7;transform:scaleX(0.8964);">TERMINAL</div>
<div class="b" style="left:914px;top:698.5px;width:77px;height:1.5px;background:#e7e7e7;"></div>
<div class="b" style="left:1410px;top:663px;width:240px;height:32px;background:#3c3c3c;"></div>
<div class="t g" style="left:1417.37px;top:667.00px;line-height:27px;font-size:19.5px;color:#f0f0f0;transform:scaleX(1.0270);">1: node</div>
<svg class="b" style="left:1630px;top:673px;" width="11" height="11" viewBox="0 0 11 11"><path d="M.5 1 H10 L5.25 10.4Z" fill="#f0f0f0"/></svg>
<svg class="b" style="left:1660px;top:655px;" width="240" height="50" viewBox="1660 655 240 50"><g fill="none" stroke="#c5c5c5" stroke-width="1.5">
<path d="M1675 677.8 H1695.4 M1685.2 667.6 V688"/>
<rect x="1725.4" y="668.6" width="18.8" height="18" rx="1.6"/><path d="M1734.8 668.6 V686.6"/>
<path d="M1773 671.6 H1789.8 M1778.4 671.4 V668.7 H1784.4 V671.4 M1774.9 672 L1775.9 685 Q1776 686.6 1777.6 686.6 H1785.2 Q1786.8 686.6 1786.9 685 L1787.9 672" />
<path d="M1778.4 674.4 V684 M1781.4 674.4 V684 M1784.4 674.4 V684" stroke-width="1.3"/>
<path d="M1821.4 682.8 L1829.9 674.4 L1838.4 682.8"/>
<path d="M1871.4 672 L1884.6 684.8 M1884.6 672 L1871.4 684.8"/>
</g></svg>
<div class="b" style="left:1160px;top:837px;width:616px;height:24px;background:#575757;"></div>
<div class="t c" style="left:500px;top:716px;color:#cccccc;letter-spacing:-0.552px">d'autres en terme de consommation de carburant ! Ce pneu est de classe B, ce qui est à peine moins bien que la classe de référ</div>
<div class="t c" style="left:500px;top:740px;color:#cccccc;letter-spacing:-0.552px">ence A (l'échelle va de A - le mieux, à G - le moins bien).&lt;/p&gt;&lt;p&gt;Le niveau sonore de ce produit est considéré comme Moyen. Le</div>
<div class="t c" style="left:500px;top:764px;color:#cccccc;letter-spacing:-0.552px"> bruit au roulement est de 72 dB, ce qui est bien moins que niveau maximum admissible qui est de 75 dB (pour des pneus de 205 </div>
<div class="t c" style="left:500px;top:788px;color:#cccccc;letter-spacing:-0.552px">mm). Sachez que comme il s'agit d'un pneu renforcé (XL), la limite légale est majorée de 1 dB.&lt;/p&gt;&lt;p&gt;L'indice de charge est de</div>
<div class="t c" style="left:500px;top:812px;color:#cccccc;letter-spacing:-0.552px"> 94 : le poids maximum qu'un pneu donné pourra supporter est de 670 kg. À savoir : prenez impérativement un indice de charge &lt;</div>
<div class="t c" style="left:500px;top:836px;color:#cccccc;letter-spacing:-0.552px">b&gt;égal ou supérieur&lt;/b&gt; à celui des pneus d'origine !&lt;/p&gt;&lt;p&gt;Cet article est référencé par le code EAN 4019238791648.&lt;/p&gt;&lt;p&gt;Vou</div>
<div class="t c" style="left:500px;top:860px;color:#cccccc;letter-spacing:-0.552px">s devez choisir un indice de vitesse supérieur ou égal à celui d'origine. Cette marchandise vous permettra d'aller jusqu'à 210</div>
<div class="t c" style="left:500px;top:884px;color:#cccccc;letter-spacing:-0.552px"> km/h - ce qui est bien suffisant. En hiver, il est possible de monter un indice de vitesse inférieur (d'une lettre) à la mont</div>
<div class="t c" style="left:500px;top:908px;color:#cccccc;letter-spacing:-0.552px">e de pneus été.&lt;/p&gt;&lt;p&gt;Ce pneu est toutes saisons : parfait si vous n'êtes pas contraint par un hiver très froid !&lt;/p&gt;&lt;p&gt;Il n'e</div>
<div class="t c" style="left:500px;top:932px;color:#cccccc;letter-spacing:-0.552px">st pas "Run Flat", c'est-à-dire qu'on ne peut pas continuer à rouler en cas de crevaison. À savoir, un pneu non "Run Flat" est</div>
<div class="t c" style="left:500px;top:956px;color:#cccccc;letter-spacing:-0.552px"> souvent moins bruyant !&lt;/p&gt;&lt;p&gt;Ce produit est garanti 1 an.&lt;/p&gt;&lt;/div&gt;</div>
<div class="b" style="left:1259px;top:957px;width:11px;height:24px;background:#c8c8c8;"></div>
<div class="b" style="left:1902px;top:951px;width:15px;height:29px;background:#424242;"></div>
<svg class="b" style="left:0px;top:984px;" width="280" height="31" viewBox="0 984 280 31"><g fill="none" stroke="#ffffff" stroke-width="1.8">
<path d="M15.8 996.4 L21.9 1002.2 L15.8 1008 M29.2 991.7 L23.4 997.2 L29.2 1002.7"/>
<g stroke-width="1.7"><circle cx="66.5" cy="993.2" r="2.6"/><circle cx="66.5" cy="1007.4" r="2.6"/><circle cx="75.3" cy="997.2" r="2.6"/>
<path d="M66.5 995.8 V1004.8 M75.3 999.8 Q75 1002.6 71 1003 Q67.4 1003.4 66.8 1004.8"/>
<path d="M146 1006.6 Q141.8 1006.4 141.8 1002.6 Q141.8 999.4 145.2 999 Q146 994.8 150.4 994.8 Q154.6 994.8 155.6 998.8 Q159.2 999.2 159.2 1002.6 Q159.2 1006.4 155 1006.6"/>
<path d="M150.4 1008.4 V1001 M147.4 1003.8 L150.4 1000.8 L153.4 1003.8"/>
<circle cx="195.3" cy="1000.4" r="8.3"/><path d="M191.3 996.4 L199.3 1004.4 M199.3 996.4 L191.3 1004.4"/>
<path d="M236 993 L244.6 1007.2 H227.4Z" stroke-linejoin="round"/></g></g>
<path d="M235.2 997.6 h1.6 l-.2 5 h-1.2z M235.2 1003.8 h1.6 v1.6 h-1.6z" fill="#ffffff"/></svg>
<div class="t g" style="left:86.85px;top:989.00px;line-height:25px;font-size:18px;color:#ffffff;transform:scaleX(0.9927);">first</div>
<div class="t g" style="left:210.90px;top:989.00px;line-height:25px;font-size:18px;color:#ffffff;transform:scaleX(1.0000);">0</div>
<div class="t g" style="left:251.90px;top:989.00px;line-height:25px;font-size:18px;color:#ffffff;transform:scaleX(1.0000);">0</div>
<div class="t g" style="left:1418.60px;top:989.00px;line-height:25px;font-size:18px;color:#ffffff;transform:scaleX(0.9515);">Li 17, Col 1</div>
<div class="t g" style="left:1529.56px;top:989.00px;line-height:25px;font-size:18px;color:#ffffff;transform:scaleX(0.9087);">Espaces : 2</div>
<div class="t g" style="left:1638.80px;top:989.00px;line-height:25px;font-size:18px;color:#ffffff;transform:scaleX(0.9340);">UTF-8</div>
<div class="t g" style="left:1710.54px;top:989.00px;line-height:25px;font-size:18px;color:#ffffff;transform:scaleX(0.8310);">CRLF</div>
<div class="t g" style="left:1773.45px;top:989.00px;line-height:25px;font-size:18px;color:#ffffff;transform:scaleX(0.9833);">Pug</div>
<svg class="b" style="left:1826px;top:988px;" width="26" height="24" viewBox="1826 988 26 24"><g fill="none" stroke="#ffffff" stroke-width="1.5"><circle cx="1839.2" cy="1000.4" r="9"/><path d="M1834.4 1002.6 Q1839.2 1008 1844 1002.6"/></g><circle cx="1835.8" cy="997.6" r="1.5" fill="#ffffff"/><circle cx="1842.6" cy="997.6" r="1.5" fill="#ffffff"/></svg>
<svg class="b" style="left:1872px;top:988px;" width="24" height="24" viewBox="1872 988 24 24"><g fill="none" stroke="#ffffff" stroke-width="1.5"><path d="M1876.2 1005.2 Q1878.6 1003.4 1878.6 1000.6 V998.6 Q1878.6 993 1884.2 993 Q1889.8 993 1889.8 998.6 V1000.6 Q1889.8 1003.4 1892.2 1005.2Z" stroke-linejoin="round"/><path d="M1882.4 1006.6 Q1884.2 1009.4 1886 1006.6"/></g></svg>
</body></html>
